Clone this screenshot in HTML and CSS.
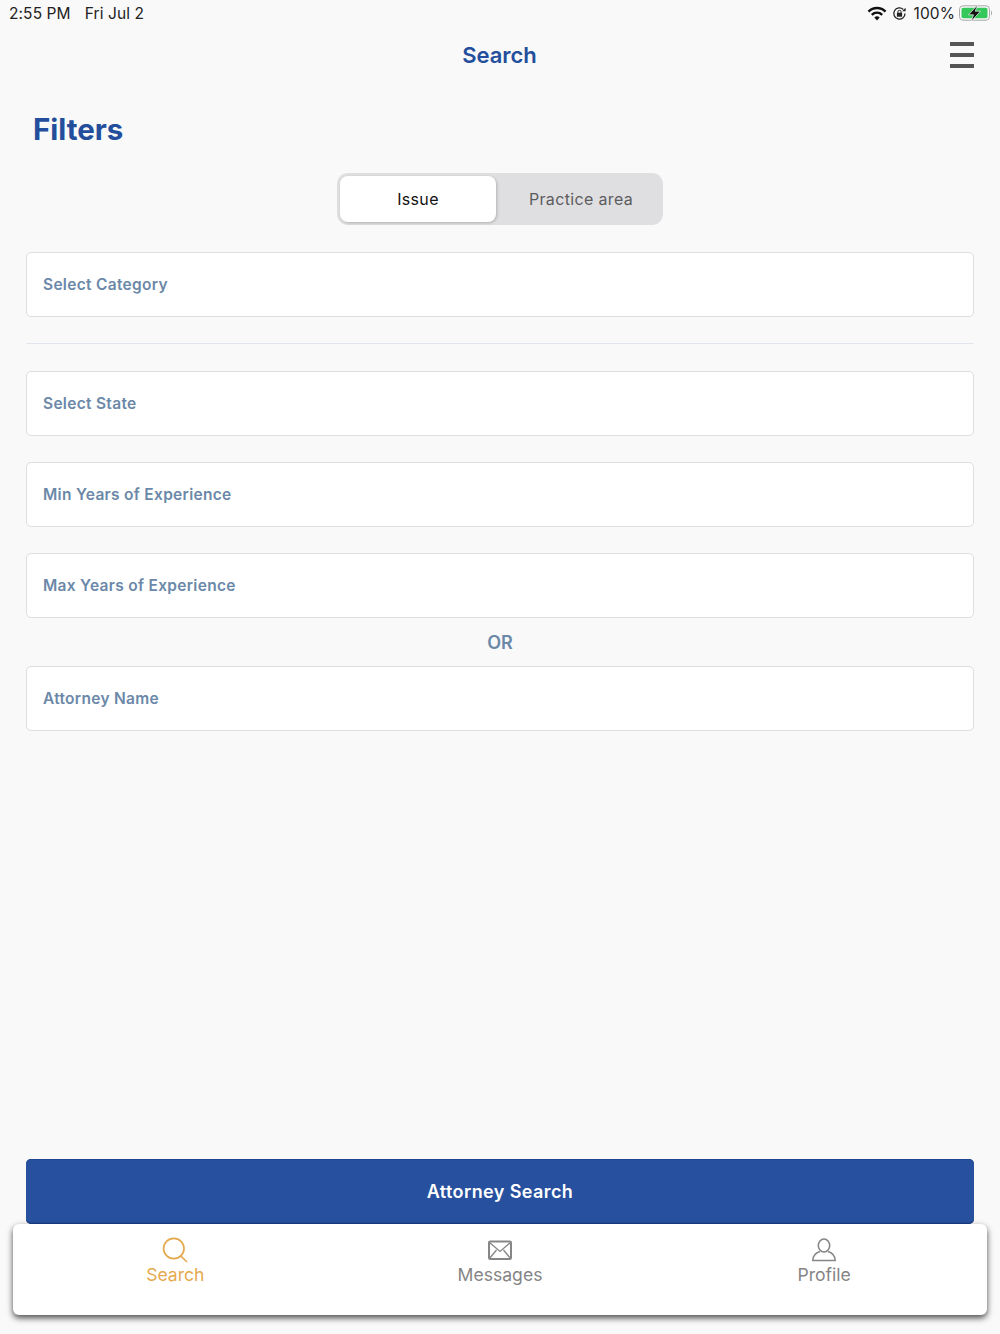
FILE: index.html
```html
<!DOCTYPE html>
<html lang="en">
<head>
<meta charset="utf-8">
<title>Search</title>
<link rel="stylesheet" href="styles.css">
</head>
<body>
<div class="page">
  <div class="status">
    <div class="status-left"><span>2:55 PM</span><span>Fri Jul 2</span></div>
    <div class="status-right">
      <svg class="wifi" width="20" height="15" viewBox="0 0 20 15"><path d="M1.5 5.6a12 12 0 0 1 17 0" fill="none" stroke="#111" stroke-width="2.400"/><path d="M4.800 8.800a7.400 7.400 0 0 1 10.400 0" fill="none" stroke="#111" stroke-width="2.400"/><path d="M10 14.500 7.300 11.600a3.800 3.800 0 0 1 5.400 0z" fill="#111"/></svg>
      <svg class="lock" width="15" height="15" viewBox="0 0 15 15"><path d="M13 7.500a5.600 5.600 0 1 1-1.700-4" fill="none" stroke="#222" stroke-width="1.300"/><path d="M13.600 1.800v3.400h-3.400z" fill="#222"/><rect x="4.900" y="6.800" width="5.200" height="4" rx=".6" fill="#222"/><path d="M5.900 7V5.900a1.600 1.600 0 0 1 3.200 0V7" fill="none" stroke="#222" stroke-width="1"/></svg>
      <span class="pct">100%</span>
      <svg class="battery" width="34" height="16" viewBox="0 0 34 16"><rect x=".5" y=".8" width="30" height="14.400" rx="3.500" fill="none" stroke="#a9a9a9"/><rect x="2.500" y="2.800" width="26" height="10.400" rx="1.800" fill="#34c759"/><path d="M32 5.500c1.300.4 1.300 4.600 0 5z" fill="#a9a9a9"/><path d="M19 -.5 9.500 9.800h5L12 16.500 21.500 6.200h-5.300z" fill="#111" stroke="#f9f9f9" stroke-width=".7"/></svg>
    </div>
  </div>

  <header class="topbar">
    <h1 class="title">Search</h1>
    <div class="menu" aria-label="Menu"><i></i><i></i><i></i></div>
  </header>

  <main class="content">
    <h2 class="filters">Filters</h2>
    <div class="segment">
      <div class="seg seg-active">Issue</div>
      <div class="seg">Practice area</div>
    </div>
    <div class="field">Select Category</div>
    <hr class="rule">
    <div class="stack">
      <div class="field">Select State</div>
      <div class="field">Min Years of Experience</div>
      <div class="field">Max Years of Experience</div>
    </div>
    <div class="or">OR</div>
    <div class="field">Attorney Name</div>
    <div class="spacer"></div>
    <button class="cta">Attorney Search</button>
  </main>

  <nav class="tabs">
    <div class="tab tab-active">
      <svg width="28" height="28" viewBox="0 0 28 28"><circle cx="12.800" cy="12.500" r="10.200" fill="none" stroke="#e5a94f" stroke-width="1.700"/><path d="M19.800 20 26 26" fill="none" stroke="#e5a94f" stroke-width="1.700"/></svg>
      <span>Search</span>
    </div>
    <div class="tab">
      <svg width="28" height="28" viewBox="0 0 28 28"><rect x="3" y="5.500" width="22" height="17.500" rx="1.200" fill="none" stroke="#868686" stroke-width="2"/><path d="M3.500 6.500 14 15.500 24.500 6.500M3.500 22.500 10.500 14M24.500 22.500 17.500 14" fill="none" stroke="#868686" stroke-width="1.300"/></svg>
      <span>Messages</span>
    </div>
    <div class="tab tab-profile">
      <svg width="28" height="28" viewBox="0 0 28 28"><ellipse cx="14" cy="9.500" rx="5.700" ry="6.500" fill="none" stroke="#868686" stroke-width="1.600"/><path d="M10 15.500C6 16.800 2.800 18.800 2.800 24.500h22.400c0-5.700-3.200-7.700-7.200-9" fill="none" stroke="#868686" stroke-width="1.600"/></svg>
      <span>Profile</span>
    </div>
  </nav>
</div>
</body>
</html>
```

FILE: styles.css
```css
* { box-sizing: border-box; }
html, body { margin: 0; height: 100%; }
body { background: #f9f9f9; font-family: Inter, "Liberation Sans", sans-serif; }

.page { display: flex; flex-direction: column; height: 1334px; overflow: hidden; }

.status { display: flex; justify-content: space-between; align-items: center; height: 26px; padding: 0 7px 0 9px; font-size: 15.5px; letter-spacing: .1px; color: #222; }
.status-left { display: flex; gap: 14px; }
.status-right { display: flex; align-items: center; gap: 6px; }
.wifi { margin-right: -1px; }
.pct { margin-left: 1px; margin-right: -2px; }

.topbar { position: relative; display: flex; align-items: center; justify-content: center; height: 58px; padding-right: 1px; }
.title { margin: 0; font-size: 22px; font-weight: 600; color: #234e9c; }
.menu { position: absolute; right: 26px; top: 16px; display: flex; flex-direction: column; gap: 7px; }
.menu i { display: block; width: 24px; height: 4px; background: #555; }

.content { flex: 1; display: flex; flex-direction: column; padding: 0 26px; min-height: 0; }
.filters { margin: 25px 0 0 7px; font-size: 29.5px; line-height: 41px; font-weight: 700; color: #234e9c; }

.segment { align-self: center; display: flex; width: 326px; height: 52px; margin-top: 23px; padding: 3px; background: #dfdfe1; border-radius: 11px; }
.seg { display: flex; align-items: center; justify-content: center; width: 163px; font-size: 16px; letter-spacing: .35px; color: #5c5c5e; }
.seg:last-child { padding-left: 7px; }
.seg-active { width: 156px; background: #fff; border-radius: 8px; color: #111; box-shadow: 1px 1px 3px rgba(0, 0, 0, .2); }

.field { display: flex; align-items: center; height: 65px; padding: 0 16px; background: #fff; border: 1px solid #dedede; border-radius: 5px; font-size: 15.5px; font-weight: 600; letter-spacing: .3px; color: #6b88a8; }
.segment + .field { margin-top: 27px; }
.rule { width: 100%; height: 1px; margin: 26px 0 27px; border: 0; background: #e0e6ec; }
.stack { display: flex; flex-direction: column; gap: 26px; }
.or { height: 49px; margin-bottom: -1px; display: flex; align-items: center; justify-content: center; font-size: 18px; font-weight: 600; color: #6b88a8; }

.spacer { flex: 1; }
.cta { height: 65px; border: 0; border-radius: 5px; background: #27509e; color: #fff; font-family: inherit; font-size: 18px; font-weight: 600; letter-spacing: .4px; box-shadow: inset 0 -1px 0 #1b3f86, inset 0 1px 0 #1f4690; }

.tabs { display: grid; grid-template-columns: repeat(3, 1fr); height: 91px; margin: 0 13px 19px; background: #fff; border-radius: 6px; box-shadow: 0 3px 6px 0 rgba(0, 0, 0, .7); }
.tab { display: flex; flex-direction: column; align-items: center; padding-top: 12px; font-size: 17.6px; line-height: 22px; color: #858585; }
.tab svg { display: block; }
.tab-profile { padding-right: 1px; }
.tab-active { color: #e5a94f; }
```
